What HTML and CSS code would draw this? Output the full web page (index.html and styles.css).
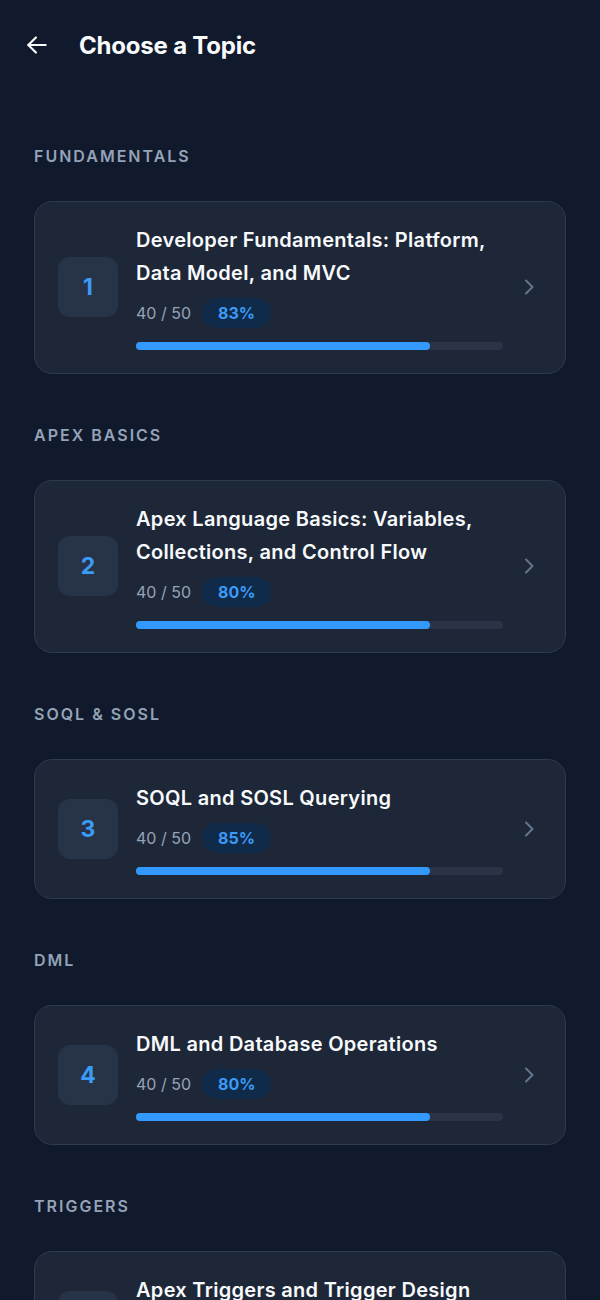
FILE: index.html
```html
<!DOCTYPE html>
<html lang="en">
<head>
    <meta charset="UTF-8">
    <meta name="viewport" content="width=device-width, initial-scale=1.0">
    <title>Choose a Topic</title>
    <link rel="stylesheet" href="styles.css">
</head>
<body>
    <header class="topbar">
        <svg class="back" width="26" height="26" viewBox="0 0 24 24" fill="none" stroke="currentColor" stroke-width="2" stroke-linecap="round" stroke-linejoin="round">
            <path d="M20 12H4"/><path d="M11 5l-7 7 7 7"/>
        </svg>
        <h1>Choose a Topic</h1>
    </header>

    <main class="topics">
        <section class="group">
            <h2 class="group-label">FUNDAMENTALS</h2>
            <div class="card">
                <div class="num">1</div>
                <div class="info">
                    <div class="title">Developer Fundamentals: Platform, Data Model, and MVC</div>
                    <div class="meta"><span class="count">40 / 50</span><span class="pill">83%</span></div>
                    <div class="bar"><div class="fill" style="width: 80%"></div></div>
                </div>
                <svg class="chev" width="20" height="20" viewBox="0 0 20 20" fill="none" stroke="currentColor" stroke-width="2" stroke-linecap="round" stroke-linejoin="round"><path d="M7 3.5l6.5 6.5-6.5 6.5"/></svg>
            </div>
        </section>

        <section class="group">
            <h2 class="group-label">APEX BASICS</h2>
            <div class="card">
                <div class="num">2</div>
                <div class="info">
                    <div class="title">Apex Language Basics: Variables, Collections, and Control Flow</div>
                    <div class="meta"><span class="count">40 / 50</span><span class="pill">80%</span></div>
                    <div class="bar"><div class="fill" style="width: 80%"></div></div>
                </div>
                <svg class="chev" width="20" height="20" viewBox="0 0 20 20" fill="none" stroke="currentColor" stroke-width="2" stroke-linecap="round" stroke-linejoin="round"><path d="M7 3.5l6.5 6.5-6.5 6.5"/></svg>
            </div>
        </section>

        <section class="group">
            <h2 class="group-label">SOQL &amp; SOSL</h2>
            <div class="card">
                <div class="num">3</div>
                <div class="info">
                    <div class="title">SOQL and SOSL Querying</div>
                    <div class="meta"><span class="count">40 / 50</span><span class="pill">85%</span></div>
                    <div class="bar"><div class="fill" style="width: 80%"></div></div>
                </div>
                <svg class="chev" width="20" height="20" viewBox="0 0 20 20" fill="none" stroke="currentColor" stroke-width="2" stroke-linecap="round" stroke-linejoin="round"><path d="M7 3.5l6.5 6.5-6.5 6.5"/></svg>
            </div>
        </section>

        <section class="group">
            <h2 class="group-label">DML</h2>
            <div class="card">
                <div class="num">4</div>
                <div class="info">
                    <div class="title">DML and Database Operations</div>
                    <div class="meta"><span class="count">40 / 50</span><span class="pill">80%</span></div>
                    <div class="bar"><div class="fill" style="width: 80%"></div></div>
                </div>
                <svg class="chev" width="20" height="20" viewBox="0 0 20 20" fill="none" stroke="currentColor" stroke-width="2" stroke-linecap="round" stroke-linejoin="round"><path d="M7 3.5l6.5 6.5-6.5 6.5"/></svg>
            </div>
        </section>

        <section class="group">
            <h2 class="group-label">TRIGGERS</h2>
            <div class="card">
                <div class="num">5</div>
                <div class="info">
                    <div class="title">Apex Triggers and Trigger Design</div>
                    <div class="meta"><span class="count">40 / 50</span><span class="pill">80%</span></div>
                    <div class="bar"><div class="fill" style="width: 80%"></div></div>
                </div>
                <svg class="chev" width="20" height="20" viewBox="0 0 20 20" fill="none" stroke="currentColor" stroke-width="2" stroke-linecap="round" stroke-linejoin="round"><path d="M7 3.5l6.5 6.5-6.5 6.5"/></svg>
            </div>
        </section>
    </main>
</body>
</html>
```

FILE: styles.css
```css
body {
    margin: 0;
    background: #111a2c;
    color: #f8fafc;
    font-family: Inter, "Noto Sans", sans-serif;
}
.topbar {
    display: flex;
    align-items: center;
    height: 90px;
    padding: 0 24px;
}
.back { color: #f8fafc; }
.topbar h1 {
    margin: 0 0 0 29px;
    font-size: 24px;
    font-weight: 700;
    letter-spacing: -0.2px;
}
.topics {
    padding: 0 34px 40px;
}
.group-label {
    margin: 51px 0 35px;
    height: 20px;
    line-height: 20px;
    font-size: 16px;
    font-weight: 600;
    letter-spacing: 2px;
    color: #94a3b8;
}
.group:first-child .group-label { margin-top: 56px; }
.card {
    display: flex;
    align-items: center;
    background: #1e2738;
    border: 1px solid #2e3a4e;
    border-radius: 18px;
    padding: 22px 26px 23px 23px;
}
.num {
    width: 60px;
    height: 60px;
    flex-shrink: 0;
    border-radius: 12px;
    background: #273347;
    color: #3b9bf6;
    font-size: 23px;
    font-weight: 700;
    display: flex;
    align-items: center;
    justify-content: center;
}
.info {
    flex: 1;
    margin-left: 18px;
}
.title {
    font-size: 20px;
    font-weight: 600;
    line-height: 33px;
    letter-spacing: 0.3px;
    color: #f8fafc;
}
.meta {
    display: flex;
    align-items: center;
    margin-top: 8px;
}
.count {
    font-size: 16px;
    color: #94a3b8;
}
.pill {
    margin-left: 11px;
    padding: 0 16px;
    height: 30px;
    line-height: 30px;
    border-radius: 15px;
    background: #102a4a;
    color: #3b9bf6;
    font-size: 16px;
    font-weight: 700;
}
.bar {
    margin-top: 14px;
    height: 8px;
    border-radius: 4px;
    background: #2a3446;
}
.fill {
    height: 100%;
    border-radius: 4px;
    background: #3399ff;
}
.chev {
    margin-left: 16px;
    color: #64748b;
    flex-shrink: 0;
}
```
